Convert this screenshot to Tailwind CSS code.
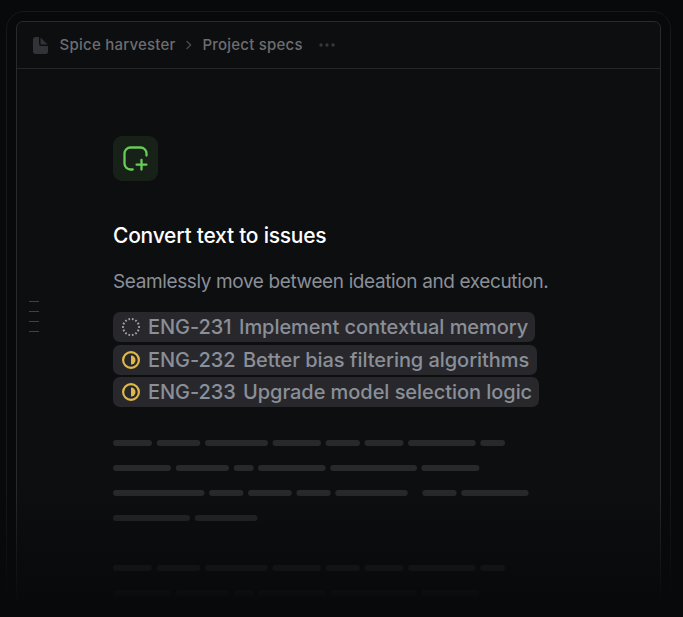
<!DOCTYPE html>
<html lang="en">
<head>
<meta charset="utf-8">
<title>Project specs</title>
<script src="https://cdn.jsdelivr.net/npm/@tailwindcss/browser@4"></script>
</head>
<body class="bg-[#08090a] font-['Inter',sans-serif]">
<div class="relative h-[617px] w-[683px] overflow-hidden pl-[6px] pt-[11px]">
  <div class="h-[640px] w-[665px] rounded-[18px] border border-[#17181a] p-[9px]">
    <div class="h-[640px] w-[645px] rounded-[7px] border border-[#292a2d] bg-[#0d0e10]">
      <header class="flex h-[47px] items-center border-b border-[#24262b] pl-[16px] text-[15px] font-[480] tracking-[0.23px] text-[#6c6d70]">
        <svg class="h-[17px] w-[15px] shrink-0" viewBox="0 0 15 17" fill="#323337"><path d="M2.5 0H6v6.5A2.5 2.5 0 0 0 8.500 9H15v5.500a2.500 2.500 0 0 1-2.500 2.500h-10A2.500 2.500 0 0 1 0 14.500v-12A2.500 2.500 0 0 1 2.500 0Z"/><path d="M7.500 0.500 14.500 7.500H8.500a1 1 0 0 1-1-1Z"/></svg>
        <span class="ml-[11.6px] w-[117px] whitespace-nowrap pt-px">Spice harvester</span>
        <svg class="ml-[8.4px] h-[10px] w-[8px] shrink-0" viewBox="0 0 8 10" fill="none" stroke="#494a4d" stroke-width="1.400" stroke-linecap="round" stroke-linejoin="round"><path d="m2 1.500 3.700 3.500L2 8.500"/></svg>
        <span class="ml-[9.4px] w-[101px] whitespace-nowrap pt-px">Project specs</span>
        <svg class="ml-[15.6px] h-[4px] w-[16px] shrink-0" viewBox="0 0 16 4" fill="#37383b"><circle cx="2" cy="2" r="1.700"/><circle cx="8" cy="2" r="1.700"/><circle cx="14" cy="2" r="1.700"/></svg>
      </header>
      <main class="flex flex-col items-start pl-[96px] pt-[67px]">
        <div class="flex size-[45px] items-center justify-center rounded-[9px] bg-[#182118]">
          <svg class="size-[45px]" viewBox="0 0 45 45" fill="none" stroke="#68cc58" stroke-width="2.300" stroke-linecap="round"><path d="M33.500 19.500V17.500a6 6 0 0 0-6-6h-10a6 6 0 0 0-6 6v10a6 6 0 0 0 6 6h2.200M28.500 23.800v9.800M23.600 28.700h9.800"/></svg>
        </div>
        <h1 class="mt-[39px] h-[32px] whitespace-nowrap text-[21px] font-[550] leading-[32px] tracking-[-0.24px] text-white">Convert text to issues</h1>
        <p class="mt-[15px] h-[30px] whitespace-nowrap text-[19px] leading-[30px] tracking-[-0.38px] text-[#8a8f98]">Seamlessly move between ideation and execution.</p>
        <ul class="mt-[15px] text-[20px] font-medium leading-[30px] tracking-[-0.05px] text-[#8a8f98]">
          <li class="flex h-[30px] w-[422px] items-center rounded-[7px] bg-[#28282c] pl-[9px]">
            <svg class="size-[18px] shrink-0" viewBox="0 0 18 18" fill="none" stroke="#a3a4a8" stroke-width="2"><circle cx="9" cy="9" r="8" pathLength="84" stroke-dasharray="2.800 3.200" stroke-dashoffset="1.400"/></svg>
            <span class="ml-[8px] w-[91px] whitespace-nowrap">ENG-231</span><span class="whitespace-nowrap">Implement contextual memory</span>
          </li>
          <li class="mt-[3px] flex h-[30px] w-[424px] items-center rounded-[7px] bg-[#28282c] pl-[9px]">
            <svg class="size-[18px] shrink-0" viewBox="0 0 18 18" fill="none"><circle cx="9" cy="9" r="7.900" stroke="#deb949" stroke-width="2.200"/><path d="M9 4.500a4.500 4.500 0 0 1 0 9Z" fill="#deb949"/></svg>
            <span class="ml-[8px] w-[95px] whitespace-nowrap">ENG-232</span><span class="whitespace-nowrap">Better bias filtering algorithms</span>
          </li>
          <li class="mt-[2px] flex h-[30px] w-[426px] items-center rounded-[7px] bg-[#28282c] pl-[9px]">
            <svg class="size-[18px] shrink-0" viewBox="0 0 18 18" fill="none"><circle cx="9" cy="9" r="7.900" stroke="#deb949" stroke-width="2.200"/><path d="M9 4.500a4.500 4.500 0 0 1 0 9Z" fill="#deb949"/></svg>
            <span class="ml-[8px] w-[95px] whitespace-nowrap">ENG-233</span><span class="whitespace-nowrap">Upgrade model selection logic</span>
          </li>
        </ul>
        <svg class="mt-[33px] h-[160px] w-[420px]" viewBox="0 0 420 160" fill="#28292b">
          <defs>
            <g id="line-a"><rect width="39" height="6" rx="3"/><rect x="43.700" width="43.600" height="6" rx="3"/><rect x="92" width="63" height="6" rx="3"/><rect x="159.500" width="48.500" height="6" rx="3"/><rect x="212.600" width="34.400" height="6" rx="3"/><rect x="251.500" width="39" height="6" rx="3"/><rect x="295" width="67.700" height="6" rx="3"/><rect x="367.300" width="24.700" height="6" rx="3"/></g>
            <g id="line-b"><rect width="58" height="6" rx="3"/><rect x="62.800" width="53.200" height="6" rx="3"/><rect x="120.700" width="20" height="6" rx="3"/><rect x="145" width="67.600" height="6" rx="3"/><rect x="217.200" width="86.800" height="6" rx="3"/><rect x="308.400" width="58" height="6" rx="3"/></g>
          </defs>
          <use href="#line-a"/>
          <use href="#line-b" y="25"/>
          <g transform="translate(0 50)"><rect width="91.500" height="6" rx="3"/><rect x="96" width="34.400" height="6" rx="3"/><rect x="135" width="43.800" height="6" rx="3"/><rect x="183.400" width="34.300" height="6" rx="3"/><rect x="222.200" width="72.500" height="6" rx="3"/><rect x="309.300" width="34.300" height="6" rx="3"/><rect x="348.200" width="67.400" height="6" rx="3"/></g>
          <g transform="translate(0 75)"><rect width="77" height="6" rx="3"/><rect x="81.800" width="62.700" height="6" rx="3"/></g>
          <use href="#line-a" y="125"/>
          <use href="#line-b" y="150"/>
        </svg>
      </main>
    </div>
  </div>
  <div class="absolute left-[29px] top-[301px] flex flex-col gap-[9px]">
    <i class="h-px w-[10px] bg-[#404144]"></i><i class="h-px w-[10px] bg-[#404144]"></i><i class="h-px w-[10px] bg-[#404144]"></i><i class="h-px w-[10px] bg-[#404144]"></i>
  </div>
  <div class="absolute inset-x-0 bottom-0 top-[490px] bg-linear-to-b from-[#08090a]/0 to-[#08090a] to-[115px]"></div>
</div>
</body>
</html>
